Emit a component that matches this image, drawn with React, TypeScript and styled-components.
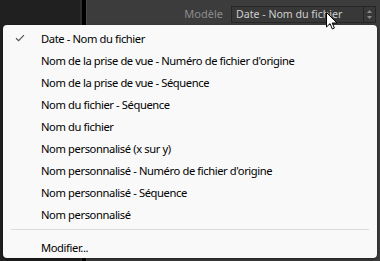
import React from "react";
import styled, { createGlobalStyle } from "styled-components";

const GlobalStyle = createGlobalStyle`
  html, body {
    margin: 0;
    padding: 0;
    background: #1f1f1f;
  }
  body {
    width: 380px;
    height: 261px;
    overflow: hidden;
    font-family: "Noto Sans", "Open Sans", sans-serif;
  }
`;

const Screen = styled.div`
  position: relative;
  width: 380px;
  height: 261px;
  display: flex;
  flex-direction: row;
  overflow: hidden;
`;

const LeftPane = styled.div`
  width: 80px;
  background: #202020;
`;

const Splitter = styled.div`
  width: 7px;
  background: #000;
  border-left: 2px solid #2e2e2e;
  border-right: 1px solid #4a4a4a;
  box-sizing: border-box;
`;

const Panel = styled.div`
  flex: 1;
  background: #3c3c3c;
  display: flex;
  flex-direction: column;
`;

const Toolbar = styled.div`
  display: flex;
  flex-direction: row;
  align-items: center;
  justify-content: flex-end;
  gap: 8px;
  padding: 5px 4px 0 0;
  height: 18px;
`;

const Label = styled.span`
  font-size: 11px;
  color: #8c8c8c;
  line-height: 18px;
`;

const Select = styled.div`
  width: 145px;
  height: 17px;
  box-sizing: border-box;
  border: 1px solid #262626;
  background: #383838;
  display: flex;
  flex-direction: row;
  align-items: center;
`;

const SelectValue = styled.span`
  flex: 1;
  font-size: 10.6px;
  color: #cfcfcf;
  padding-left: 4px;
  line-height: 15px;
  white-space: nowrap;
  overflow: hidden;
`;

const Stepper = styled.div`
  width: 11px;
  height: 100%;
  border-left: 1px solid #262626;
  display: flex;
  align-items: center;
  justify-content: center;
`;

const Menu = styled.div`
  position: absolute;
  left: 3px;
  top: 25px;
  width: 374px;
  box-sizing: border-box;
  padding: 2px 0 0;
  background: #f9f9f9;
  border-radius: 4px;
  box-shadow: 0 1px 3px rgba(0, 0, 0, 0.5);
`;

const Item = styled.div`
  height: 22px;
  display: flex;
  flex-direction: row;
  align-items: center;
  font-size: 11.2px;
  letter-spacing: -0.4px;
  color: #000;
  white-space: nowrap;
`;

const Gutter = styled.div`
  width: 38px;
  display: flex;
  align-items: center;
  padding-left: 12px;
  box-sizing: border-box;
`;

const Separator = styled.div`
  height: 1px;
  margin: 4px 8px 6px 8px;
  background: #dcdcdc;
`;

const Cursor = styled.svg`
  position: absolute;
  left: 326px;
  top: 12px;
`;

const items = [
  "Date - Nom du fichier",
  "Nom de la prise de vue - Numéro de fichier d'origine",
  "Nom de la prise de vue - Séquence",
  "Nom du fichier - Séquence",
  "Nom du fichier",
  "Nom personnalisé (x sur y)",
  "Nom personnalisé - Numéro de fichier d'origine",
  "Nom personnalisé - Séquence",
  "Nom personnalisé",
];

const Check = () => (
  <svg width="10" height="8" viewBox="0 0 10 8">
    <path d="M1 4.2 L3.6 6.6 L9 1.2" fill="none" stroke="#555" strokeWidth="1.2" />
  </svg>
);

const App: React.FC = () => {
  return (
    <>
      <GlobalStyle />
      <Screen>
        <LeftPane />
        <Splitter />
        <Panel>
          <Toolbar>
            <Label>Modèle</Label>
            <Select>
              <SelectValue>Date - Nom du fichier</SelectValue>
              <Stepper>
                <svg width="7" height="11" viewBox="0 0 7 11">
                  <path d="M3.5 1 L6 4 L1 4 Z" fill="#8a8a8a" />
                  <path d="M3.5 10 L6 7 L1 7 Z" fill="#8a8a8a" />
                </svg>
              </Stepper>
            </Select>
          </Toolbar>
        </Panel>
        <Menu>
          {items.map((label, i) => (
            <Item key={label}>
              <Gutter>{i === 0 && <Check />}</Gutter>
              {label}
            </Item>
          ))}
          <Separator />
          <Item>
            <Gutter />
            Modifier...
          </Item>
        </Menu>
        <Cursor width="12" height="19" viewBox="0 0 12 19">
          <path
            d="M0.5 0.5 L0.5 15 L4 11.6 L6.3 17 L8.4 16 L6.2 11 L11 11 Z"
            fill="#fff"
            stroke="#000"
            strokeWidth="1"
          />
        </Cursor>
      </Screen>
    </>
  );
};

export default App;
